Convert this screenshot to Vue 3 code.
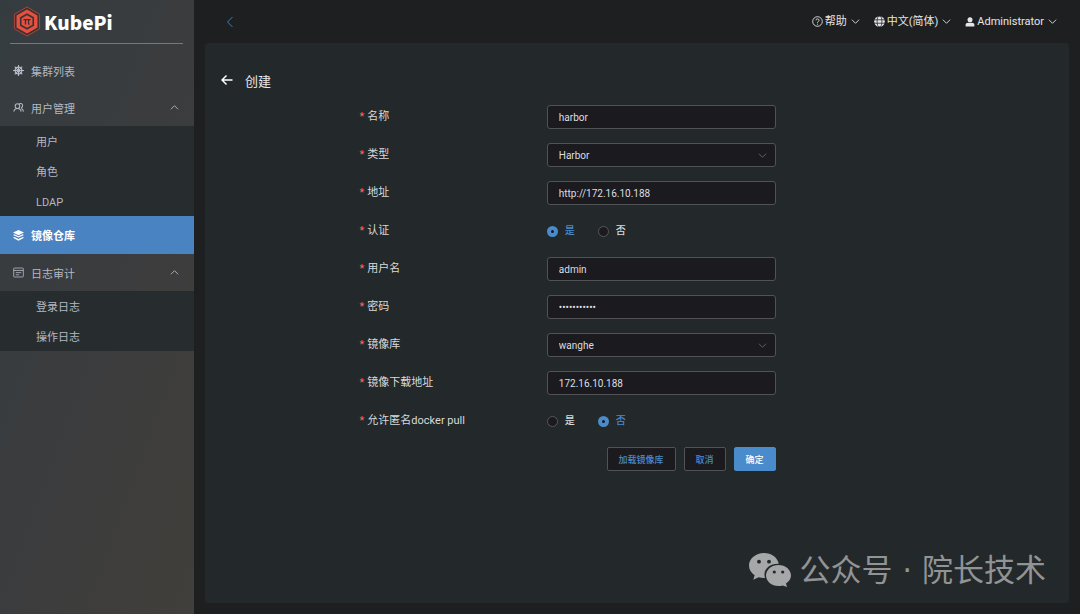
<template>
	<div class="layout">
		<aside class="sidebar">
			<div class="logo">
				<svg class="logo-mark" viewBox="0 0 28 32">
					<path d="M14 1 27 8.500v15L14 31 1 23.500v-15z" fill="#40302f" stroke="#a9473f" stroke-width="1" />
					<path d="M14 3.500 24.800 9.700v12.600L14 28.500 3.200 22.300V9.700z" fill="#e5503f" />
					<path d="M14 7.500 21.300 11.700v8.600L14 24.500 6.700 20.300v-8.600z" fill="#3a3335" />
					<path d="M14 9.500 19.600 12.700v6.600L14 22.500 8.400 19.300v-6.600z" fill="#e5503f" />
					<path d="M10.300 14h7.400M12.400 14v5M15.600 14v4.500l1 .5" fill="none" stroke="#3a3335" stroke-width="1.300" />
				</svg>
				<span class="logo-name">KubePi</span>
			</div>

			<nav class="menu">
				<template v-for="item in menu" :key="item.title">
					<a href="#" class="menu-item" :class="{ active: item.active }" @click.prevent="toggle(item)">
						<svg class="menu-icon" viewBox="0 0 16 16">
							<g v-if="item.icon === 'helm'" fill="none" stroke="currentColor" stroke-width="1.800">
								<circle cx="8" cy="8" r="4.800" />
								<circle cx="8" cy="8" r="1.500" />
								<path d="M8 0v16M0 8h16M2.500 2.500l11 11M13.500 2.500l-11 11" stroke-width="1.500" />
							</g>
							<g v-else-if="item.icon === 'users'" fill="none" stroke="currentColor" stroke-width="1.500">
								<circle cx="6.500" cy="6" r="3.300" />
								<path d="M1.200 14c.3-3 2.300-4.700 5.300-4.700s5 1.700 5.300 4.700M9 2.900a3.100 3.100 0 1 1 2.500 5.500M12 9.500c2 .7 3 2.200 3.200 4.500" />
							</g>
							<g v-else-if="item.icon === 'layers'" fill="currentColor">
								<path d="M8 0 16 3.800 8 7.600 0 3.800z" />
								<path d="M0 7.200l2-.9 6 2.800 6-2.800 2 .9L8 11z" />
								<path d="M0 11.200l2-.9 6 2.800 6-2.800 2 .9L8 15.500z" />
							</g>
							<g v-else fill="none" stroke="currentColor" stroke-width="1.200">
								<rect x="1" y="1.500" width="14" height="13" rx="1" />
								<path d="M1 5h14M4 8.200h8M4 11.300h5" />
							</g>
						</svg>
						<span class="menu-title">{{ item.title }}</span>
						<svg v-if="item.children" class="chevron" :class="{ up: item.open }" viewBox="0 0 10 10">
							<path d="M1 3l4 4 4-4" />
						</svg>
					</a>
					<div v-if="item.children && item.open" class="submenu">
						<a v-for="child in item.children" :key="child" href="#" class="submenu-item" @click.prevent>{{ child }}</a>
					</div>
				</template>
			</nav>
		</aside>

		<div class="main">
			<header class="header">
				<button type="button" class="collapse" aria-label="collapse">
					<svg viewBox="0 0 12 12"><path d="M8.500 1 3.500 6l5 5" /></svg>
				</button>
				<div class="header-actions">
					<button type="button" class="dropdown">
						<svg class="header-icon" viewBox="0 0 16 16" fill="none" stroke="currentColor" stroke-width="1.300">
							<circle cx="8" cy="8" r="7" />
							<path d="M5.800 6.300a2.200 2.200 0 1 1 3.300 1.900C8.300 8.700 8 9 8 9.900M8 11.200v1.400" />
						</svg>
						<span>帮助</span>
						<svg class="chevron" viewBox="0 0 10 10"><path d="M1 3l4 4 4-4" /></svg>
					</button>
					<button type="button" class="dropdown">
						<svg class="header-icon" viewBox="0 0 16 16">
							<circle cx="8" cy="8" r="7.700" fill="currentColor" />
							<g fill="none" stroke="#1e1f21" stroke-width="1.100">
								<ellipse cx="8" cy="8" rx="3.500" ry="7.700" />
								<path d="M0 5.500h16M0 10.500h16" />
							</g>
						</svg>
						<span>中文(简体)</span>
						<svg class="chevron" viewBox="0 0 10 10"><path d="M1 3l4 4 4-4" /></svg>
					</button>
					<button type="button" class="dropdown">
						<svg class="header-icon user" viewBox="0 0 16 16" fill="currentColor">
							<circle cx="8" cy="4.500" r="4" />
							<path d="M1 15v-2.500C1 10.500 2.500 9.300 5 9.300h6c2.500 0 4 1.200 4 3.200V15z" />
						</svg>
						<span>Administrator</span>
						<svg class="chevron" viewBox="0 0 10 10"><path d="M1 3l4 4 4-4" /></svg>
					</button>
				</div>
			</header>

			<main class="card">
				<div class="page-title">
					<button type="button" class="back" aria-label="back">
						<svg viewBox="0 0 12 12"><path d="M11.500 6H1.500M5.500 1.500 1 6l4.500 4.500" /></svg>
					</button>
					<h1>创建</h1>
				</div>

				<form class="form" @submit.prevent>
					<div v-for="field in fields" :key="field.key" class="form-item">
						<label :id="`${field.key}-label`" class="form-label" :for="field.type === 'radio' ? `${field.key}-yes` : field.key">
							<span class="required">*</span>{{ field.label }}
						</label>
						<div v-if="field.type === 'select'" class="select">
							<select :id="field.key" v-model="form[field.key]">
								<option v-for="option in field.options" :key="option">{{ option }}</option>
							</select>
							<svg class="chevron" viewBox="0 0 10 10"><path d="M1 3l4 4 4-4" /></svg>
						</div>
						<div v-else-if="field.type === 'radio'" class="radio-group" role="radiogroup" :aria-labelledby="`${field.key}-label`">
							<label class="radio">
								<input :id="`${field.key}-yes`" v-model="form[field.key]" type="radio" :name="field.key" :value="true" />
								<span>是</span>
							</label>
							<label class="radio">
								<input v-model="form[field.key]" type="radio" :name="field.key" :value="false" />
								<span>否</span>
							</label>
						</div>
						<input v-else :id="field.key" v-model="form[field.key]" class="input" :type="field.type" autocomplete="off" />
					</div>

					<div class="form-actions">
						<button type="button" class="btn">加载镜像库</button>
						<button type="button" class="btn">取消</button>
						<button type="submit" class="btn primary">确定</button>
					</div>
				</form>
			</main>
		</div>

		<div class="watermark">
			<svg viewBox="0 0 42 34">
				<path d="M15 0C6.700 0 0 5.600 0 12.600c0 4 2.200 7.400 5.600 9.700L4.300 26.800l5.300-2.600c1.700.5 3.500.8 5.400.8h1C13.500 17 20 10.500 29.800 10.800 28.500 4.500 22.500 0 15 0z" />
				<path d="M29.500 12C22.600 12 17 16.700 17 22.500S22.600 33 29.500 33c1.500 0 3-.2 4.300-.6l4.200 1.600-1-3.600c3-1.900 5-4.700 5-7.900C42 16.700 36.400 12 29.500 12z" />
				<g class="eyes">
					<circle cx="10" cy="8.700" r="1.900" />
					<circle cx="20" cy="8.700" r="1.900" />
					<circle cx="25.300" cy="19" r="1.600" />
					<circle cx="33.700" cy="19" r="1.600" />
				</g>
			</svg>
			<span>公众号 · 院长技术</span>
		</div>
	</div>
</template>

<script setup>
import { reactive } from 'vue';

const menu = reactive([
	{ title: '集群列表', icon: 'helm' },
	{ title: '用户管理', icon: 'users', open: true, children: ['用户', '角色', 'LDAP'] },
	{ title: '镜像仓库', icon: 'layers', active: true },
	{ title: '日志审计', icon: 'log', open: true, children: ['登录日志', '操作日志'] },
]);

const fields = [
	{ key: 'name', label: '名称', type: 'text' },
	{ key: 'type', label: '类型', type: 'select', options: ['Harbor'] },
	{ key: 'endpoint', label: '地址', type: 'text' },
	{ key: 'auth', label: '认证', type: 'radio' },
	{ key: 'username', label: '用户名', type: 'text' },
	{ key: 'password', label: '密码', type: 'password' },
	{ key: 'repo', label: '镜像库', type: 'select', options: ['wanghe'] },
	{ key: 'downloadUrl', label: '镜像下载地址', type: 'text' },
	{ key: 'allowAnonymous', label: '允许匿名docker pull', type: 'radio' },
];

const form = reactive({
	name: 'harbor',
	type: 'Harbor',
	endpoint: 'http://172.16.10.188',
	auth: true,
	username: 'admin',
	password: 'harbor12345',
	repo: 'wanghe',
	downloadUrl: '172.16.10.188',
	allowAnonymous: false,
});

const toggle = (item) => {
	if (item.children) {
		item.open = !item.open;
	}
};
</script>

<style>
body {
	margin: 0;
	background: #1e1f21;
}
</style>

<style scoped>
* {
	box-sizing: border-box;
}

.layout {
	position: relative;
	display: flex;
	min-height: 100vh;
	font-family: Roboto, 'Noto Sans CJK SC', sans-serif;
	font-size: 11px;
	color: #d8dadc;
	background: #1e1f21;
}

button,
input,
select {
	font-family: inherit;
}

a {
	color: inherit;
	text-decoration: none;
}

/* sidebar */
.sidebar {
	flex: none;
	width: 194px;
	background: linear-gradient(110deg, #353c40, #3b3c3e 50%, #413f3b);
}

.logo {
	display: flex;
	align-items: center;
	gap: 3px;
	height: 44px;
	margin: 0 11px 8px 10px;
	padding-left: 3px;
	border-bottom: 1px solid #76797c;
}

.logo-mark {
	width: 28px;
	height: 31px;
}

.logo-name {
	font-family: 'Noto Sans CJK SC', sans-serif;
	font-size: 19px;
	line-height: 24px;
	font-weight: 900;
	color: #fff;
}

.menu-item {
	display: flex;
	align-items: center;
	height: 37px;
	padding: 0 15px 0 13px;
	color: #b3b8c2;
}

.menu-item.active {
	height: 38px;
	background: #4a83c2;
	color: #fff;
	font-weight: 700;
}

.menu-icon {
	width: 11px;
	height: 11px;
	margin-right: 7px;
}

.menu-title {
	flex: 1;
}

.submenu {
	background: #272c2f;
}

.submenu-item {
	display: block;
	padding: 4px 0 0 36px;
	line-height: 26px;
	color: #b3b8c2;
}

.chevron {
	width: 9px;
	height: 9px;
	fill: none;
	stroke: currentColor;
	stroke-width: 1;
}

.chevron.up {
	transform: rotate(180deg);
}

/* header */
.main {
	flex: 1;
	display: flex;
	flex-direction: column;
	padding: 0 11px 11px;
}

.header {
	display: flex;
	align-items: center;
	justify-content: space-between;
	height: 43px;
	padding: 0 12px 0 19px;
}

.header button,
.back {
	padding: 0;
	border: 0;
	background: none;
	cursor: pointer;
}

.collapse svg {
	display: block;
	width: 12px;
	height: 12px;
	fill: none;
	stroke: #3f7fc1;
}

.header-actions {
	display: flex;
	gap: 14px;
}

.dropdown {
	display: flex;
	align-items: center;
	gap: 2px;
	font-size: 11px;
	line-height: 14px;
	color: #e3e5e8;
}

.dropdown .chevron {
	margin-left: 2px;
}

.header-icon {
	width: 11px;
	height: 11px;
}

.header-icon.user {
	width: 10px;
	height: 10px;
}

/* content */
.card {
	flex: 1;
	padding: 25px 16px;
	border-radius: 3px;
	background: #23282a;
}

.page-title {
	display: flex;
	align-items: center;
	gap: 12px;
	height: 24px;
}

.back svg {
	display: block;
	width: 12px;
	height: 12px;
	fill: none;
	stroke: #fff;
	stroke-width: 1.5;
}

h1 {
	margin: 0;
	font-size: 13px;
	font-weight: 400;
	color: #e8eaec;
}

.form {
	display: flex;
	flex-direction: column;
	gap: 14px;
	width: 50%;
	margin: 13px 0 0 16.66%;
}

.form-item {
	display: grid;
	grid-template-columns: 45% 55%;
	align-items: center;
	height: 24px;
}

.form-label {
	line-height: 14px;
}

.required {
	margin-right: 3px;
	color: #ef6a66;
}

.input,
.select select {
	width: 100%;
	height: 24px;
	padding: 0 11px;
	border: 1px solid #505255;
	border-radius: 3px;
	background: #1b1a1f;
	color: #dcdee0;
	font-size: 10px;
	outline: none;
}

.select {
	position: relative;
}

.select select {
	display: block;
	appearance: none;
}

.select .chevron {
	position: absolute;
	top: 8px;
	right: 9px;
	color: #66696d;
	pointer-events: none;
}

.radio-group {
	display: flex;
	gap: 23px;
}

.radio {
	display: flex;
	align-items: center;
	gap: 7px;
	font-size: 10px;
	line-height: 14px;
	font-weight: 500;
}

.radio input {
	appearance: none;
	width: 11px;
	height: 11px;
	margin: 0;
	border: 1px solid #55575a;
	border-radius: 50%;
	background: #1b1a1f;
}

.radio input:checked {
	border: 4px solid #4a8bcb;
}

.radio input:checked + span {
	color: #4a8bcb;
}

.form-actions {
	display: flex;
	justify-content: flex-end;
	gap: 8px;
}

.btn {
	height: 24px;
	padding: 0 11px;
	border: 1px solid #505255;
	border-radius: 2px;
	background: #1b1a1f;
	color: #4a8bcb;
	font-size: 9px;
	font-weight: 500;
	cursor: pointer;
}

.btn.primary {
	border-color: #4a8bcb;
	background: #4a8bcb;
	color: #fff;
}

.watermark {
	position: absolute;
	right: 34px;
	bottom: 22px;
	display: flex;
	align-items: center;
	gap: 8px;
	font-family: 'DejaVu Sans', 'Noto Sans CJK SC', sans-serif;
	font-size: 31px;
	line-height: 44px;
	color: #919395;
	pointer-events: none;
}

.watermark svg {
	width: 42px;
	height: 34px;
	fill: #a6a7a9;
}

.watermark .eyes {
	fill: #23282a;
}
</style>
